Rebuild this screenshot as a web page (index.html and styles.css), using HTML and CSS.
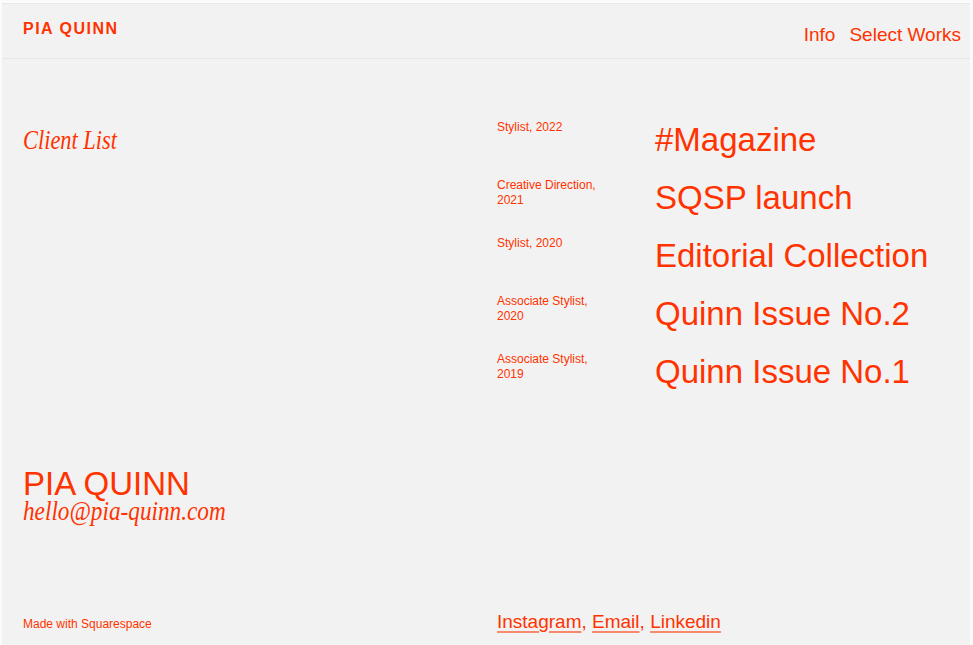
FILE: index.html
```html
<!DOCTYPE html>
<html lang="en">
<head>
<meta charset="utf-8">
<title>Pia Quinn — Client List</title>
<link rel="stylesheet" href="styles.css">
</head>
<body>
<div class="page">
  <header class="site-header">
    <a class="logo" href="#">PIA QUINN</a>
    <nav class="nav">
      <a href="#">Info</a>
      <a href="#">Select Works</a>
    </nav>
  </header>

  <main class="content">
    <section class="intro">
      <h1 class="serif-italic"><span class="condensed">Client List</span></h1>
      <div class="contact">
        <p class="contact-name">PIA QUINN</p>
        <p class="serif-italic contact-mail"><span class="condensed mail-condensed">hello@pia-quinn.com</span></p>
      </div>
    </section>

    <section class="works">
      <div class="work">
        <p class="work-role">Stylist, 2022</p>
        <p class="work-title">#Magazine</p>
      </div>
      <div class="work">
        <p class="work-role">Creative Direction, 2021</p>
        <p class="work-title">SQSP launch</p>
      </div>
      <div class="work">
        <p class="work-role">Stylist, 2020</p>
        <p class="work-title">Editorial Collection</p>
      </div>
      <div class="work">
        <p class="work-role">Associate Stylist, 2020</p>
        <p class="work-title">Quinn Issue No.2</p>
      </div>
      <div class="work">
        <p class="work-role">Associate Stylist, 2019</p>
        <p class="work-title">Quinn Issue No.1</p>
      </div>
    </section>
  </main>

  <footer class="site-footer">
    <p class="made-with">Made with Squarespace</p>
    <p class="social"><a href="#">Instagram</a>, <a href="#">Email</a>, <a href="#">Linkedin</a></p>
  </footer>
</div>
</body>
</html>
```

FILE: styles.css
```css
* { box-sizing: border-box; }

html, body {
  margin: 0;
  padding: 0;
}

body {
  background: #fbfbfb;
  color: #ff3300;
  font-family: "Liberation Sans", Arial, sans-serif;
}

a { color: inherit; text-decoration: none; }
p, h1 { margin: 0; font-weight: normal; }

.page {
  margin: 3px 3px 0 2px;
  height: 642px;
  background: #f2f2f2;
  border-top: 1px solid #e9e9e9;
  display: flex;
  flex-direction: column;
  overflow: hidden;
}

/* Header */
.site-header {
  height: 55px;
  padding: 15px 9px 0 21px;
  border-bottom: 1px solid #e6e6e6;
  display: flex;
  justify-content: space-between;
  align-items: flex-start;
}

.logo {
  font-weight: bold;
  font-size: 16px;
  line-height: 20px;
  letter-spacing: 1.5px;
}

.nav {
  display: flex;
  gap: 14px;
  padding-top: 4px;
  font-size: 19px;
  line-height: 24px;
}

/* Main */
.content {
  display: grid;
  grid-template-columns: 474px 1fr;
  padding: 61px 0 0 21px;
}

.serif-italic {
  font-family: "Liberation Serif", "Times New Roman", serif;
  font-style: italic;
  font-size: 28px;
}

.condensed {
  display: inline-block;
  transform: scaleX(0.8);
  transform-origin: left center;
}

.mail-condensed {
  transform: scaleX(0.83);
}

.intro h1 {
  line-height: 40px;
}

.contact {
  margin-top: 309px;
}

.contact-name {
  font-size: 33px;
  line-height: 30px;
}

.contact-mail {
  line-height: 24px;
}

.works {
  display: flex;
  flex-direction: column;
  gap: 18px;
}

.work {
  display: grid;
  grid-template-columns: 110px 1fr;
  column-gap: 48px;
  align-items: start;
}

.work-role {
  font-size: 12px;
  line-height: 15px;
}

.work-title {
  font-size: 33px;
  line-height: 40px;
  white-space: nowrap;
}

/* Footer */
.site-footer {
  margin-top: auto;
  display: grid;
  grid-template-columns: 474px 1fr;
  align-items: baseline;
  padding: 0 0 11px 21px;
}

.made-with {
  font-size: 12px;
  line-height: 15px;
}

.social {
  font-size: 19px;
  line-height: 24px;
}

.social a {
  text-decoration: underline;
  text-decoration-color: rgba(255, 51, 0, 0.55);
  text-decoration-thickness: 1.5px;
  text-underline-offset: 3px;
}
```
